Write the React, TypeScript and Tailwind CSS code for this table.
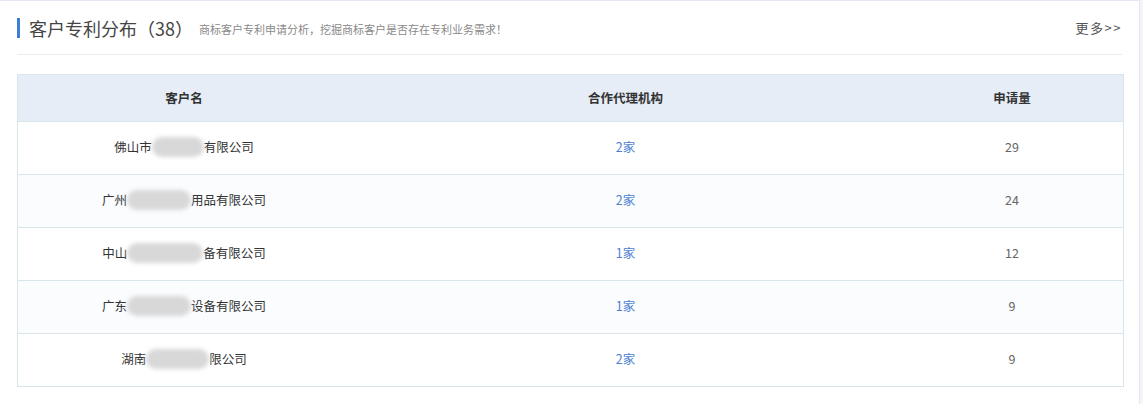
import React from 'react';

interface Row {
  prefix: string;
  blur: number;
  suffix: string;
  agencies: string;
  count: number;
}

const rows: Row[] = [
  { prefix: '佛山市', blur: 52, suffix: '有限公司', agencies: '2家', count: 29 },
  { prefix: '广州', blur: 64, suffix: '用品有限公司', agencies: '2家', count: 24 },
  { prefix: '中山', blur: 76, suffix: '备有限公司', agencies: '1家', count: 12 },
  { prefix: '广东', blur: 64, suffix: '设备有限公司', agencies: '1家', count: 9 },
  { prefix: '湖南', blur: 63, suffix: '限公司', agencies: '2家', count: 9 },
];

const App: React.FC = () => {
  return (
    <div
      className="w-[1143px] h-[404px] bg-[#f3f5fa] overflow-hidden"
      style={{ fontFamily: '"Noto Sans CJK SC", "Noto Sans", sans-serif' }}
    >
      <div className="w-[1140px] h-[404px] bg-white border-t border-r border-[#e4e8f0] px-[17px]">
        {/* Header */}
        <div className="flex items-center justify-between h-[54px] border-b border-[#e8ebef]">
          <div className="flex items-center">
            <span className="w-[3px] h-[20px] bg-[#3d7fd6] mr-[9px]" />
            <span className="text-[18px] text-[#444] leading-none">客户专利分布（38）</span>
            <span className="text-[11px] text-[#8a8a8a] ml-[6px] mt-[3px]">
              商标客户专利申请分析，挖掘商标客户是否存在专利业务需求！
            </span>
          </div>
          <span className="text-[13px] text-[#555] tracking-[1.5px]">更多&gt;&gt;</span>
        </div>

        {/* Table */}
        <div className="mt-[19px] w-[1107px] border border-[#d8e6ec] text-[12.5px]">
          <div className="grid grid-cols-[332px_551px_222px] h-[46px] items-center bg-[#e6edf7] font-bold text-[#333]">
            <div className="text-center">客户名</div>
            <div className="text-center">合作代理机构</div>
            <div className="text-center">申请量</div>
          </div>
          {rows.map((r, i) => (
            <div
              key={i}
              className={`grid grid-cols-[332px_551px_222px] h-[53px] items-center border-t border-[#d8e6ec] pb-[2px] ${
                i % 2 === 1 ? 'bg-[#fafcfe]' : 'bg-white'
              }`}
            >
              <div className="flex items-center justify-center text-[#333]">
                <span>{r.prefix}</span>
                <span
                  className="inline-block h-[20px] rounded-full bg-[#d8d8d8] blur-[2px]"
                  style={{ width: r.blur }}
                />
                <span>{r.suffix}</span>
              </div>
              <div className="text-center text-[#4a7fd0]">{r.agencies}</div>
              <div className="text-center text-[#666]">{r.count}</div>
            </div>
          ))}
        </div>
      </div>
    </div>
  );
};

export default App;
